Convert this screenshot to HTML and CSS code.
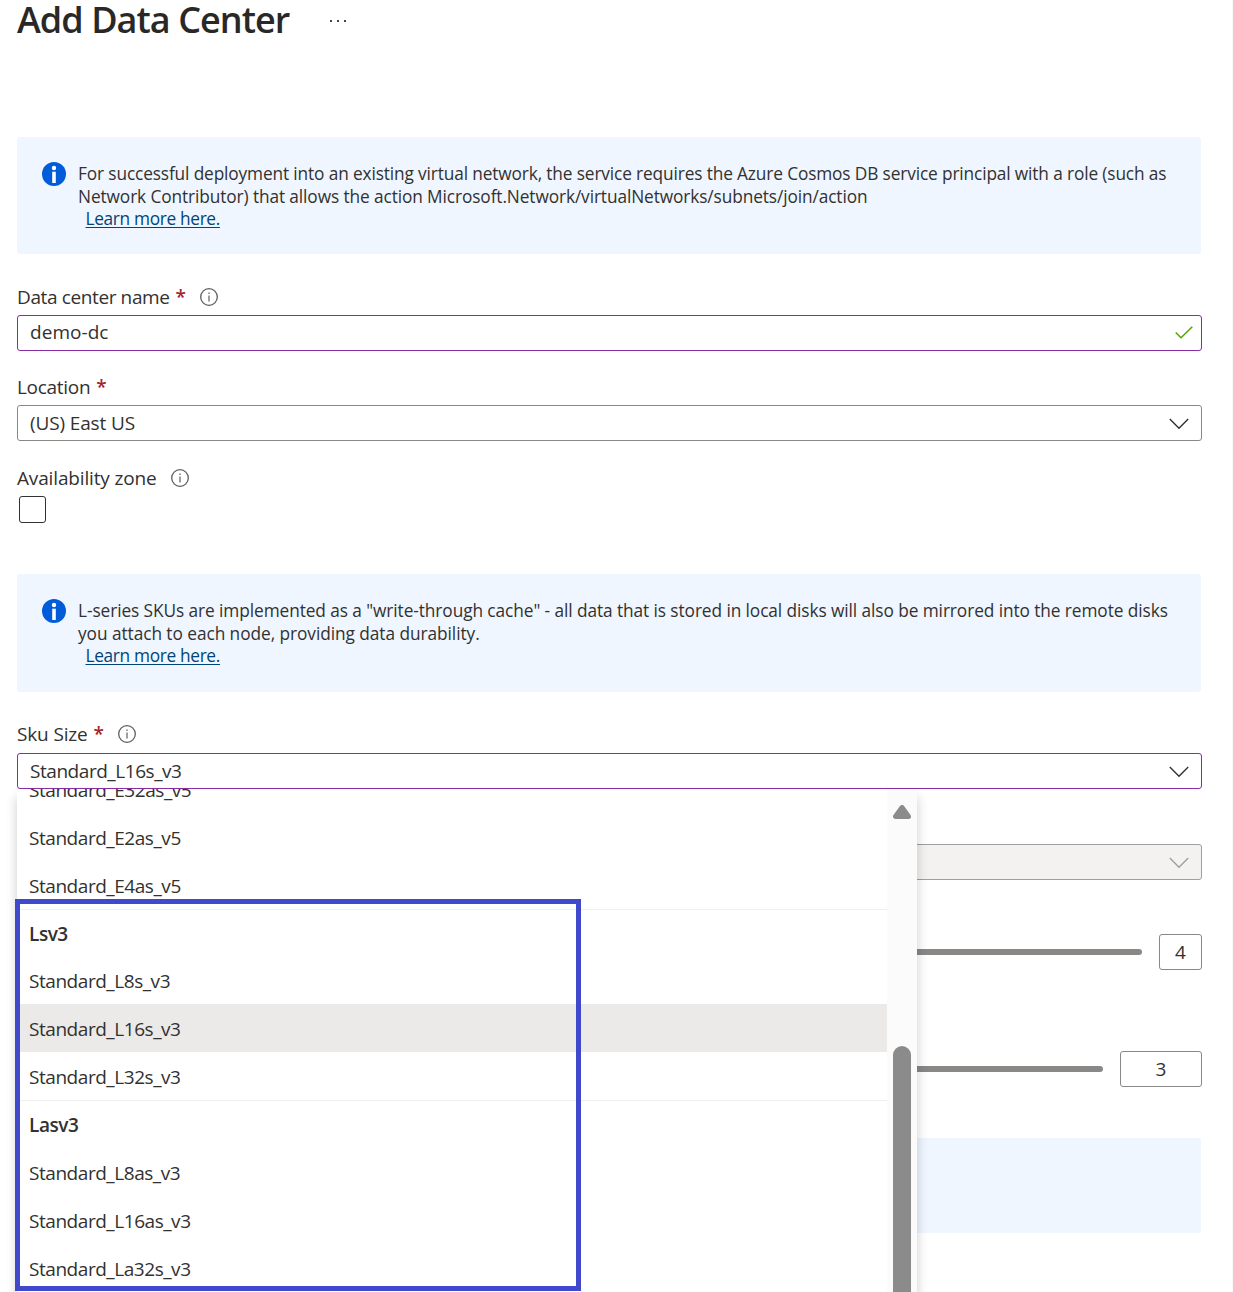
FILE: index.html
```html
<!DOCTYPE html>
<html lang="en">
<head>
<meta charset="utf-8">
<title>Add Data Center</title>
<link rel="stylesheet" href="styles.css">
</head>
<body>
<svg width="0" height="0" class="defs">
  <symbol id="info" viewBox="0 0 18 18"><circle cx="9" cy="9" r="8.3" fill="none" stroke="#605e5c" stroke-width="1.3"/><path d="M9 7.4v6M9 4.6v1.5" stroke="#605e5c" stroke-width="1.2"/></symbol>
  <symbol id="info-solid" viewBox="0 0 24 24"><circle cx="12" cy="12" r="12" fill="#015cda"/><circle cx="12" cy="6" r="2.2" fill="#fff"/><path d="M12 9.7V21" stroke="#fff" stroke-width="3.6"/></symbol>
  <symbol id="chevron" viewBox="0 0 20 12"><path d="M.8 1 10 10.2 19.2 1" fill="none" stroke="currentColor" stroke-width="1.4"/></symbol>
</svg>
<main class="page">
  <header class="header">
    <h1 class="title">Add Data Center</h1>
    <svg class="more" viewBox="0 0 18 2"><path d="M1 0h2v2H1zM8 0h2v2H8zM15 0h2v2h-2z" fill="#444"/></svg>
  </header>

  <section class="notice">
    <svg class="notice-icon"><use href="#info-solid"/></svg>
    <p class="notice-text"><span class="n1">For successful deployment into an existing virtual network, the service requires the Azure Cosmos DB service principal with a role (such as</span><br><span class="n2">Network Contributor) that allows the action Microsoft.Network/virtualNetworks/subnets/join/action</span><br><a class="link" href="#">Learn more here.</a></p>
  </section>

  <div class="label label-name"><span class="l1">Data center name</span> <b class="req">*</b><svg class="info"><use href="#info"/></svg></div>
  <div class="field active"><span class="v1">demo-dc</span><svg class="check" viewBox="0 0 18 13"><path d="M.7 6.5 6 11.7 17.3.7" fill="none" stroke="#57a300" stroke-width="1.5"/></svg></div>

  <div class="label label-location"><span class="l2">Location</span> <b class="req">*</b></div>
  <div class="field"><span class="v2">(US) East US</span><svg class="chevron"><use href="#chevron"/></svg></div>

  <div class="label label-zone"><span class="l3">Availability zone</span><svg class="info"><use href="#info"/></svg></div>
  <div class="checkbox"></div>

  <section class="notice notice-cache">
    <svg class="notice-icon"><use href="#info-solid"/></svg>
    <p class="notice-text"><span class="n3">L-series SKUs are implemented as a "write-through cache" - all data that is stored in local disks will also be mirrored into the remote disks</span><br><span class="n4">you attach to each node, providing data durability.</span><br><a class="link" href="#">Learn more here.</a></p>
  </section>

  <div class="label label-sku"><span class="l4">Sku Size</span> <b class="req">*</b><svg class="info"><use href="#info"/></svg></div>
  <div class="select">
    <div class="field active"><span class="v3">Standard_L16s_v3</span><svg class="chevron"><use href="#chevron"/></svg></div>
    <div class="menu">
      <ul class="options">
        <li class="option">Standard_E32as_v5</li>
        <li class="option">Standard_E2as_v5</li>
        <li class="option">Standard_E4as_v5</li>
        <li class="option group">Lsv3</li>
        <li class="option first">Standard_L8s_v3</li>
        <li class="option selected">Standard_L16s_v3</li>
        <li class="option">Standard_L32s_v3</li>
        <li class="option group">Lasv3</li>
        <li class="option">Standard_L8as_v3</li>
        <li class="option">Standard_L16as_v3</li>
        <li class="option">Standard_La32s_v3</li>
      </ul>
      <div class="scrollbar">
        <svg class="arrow" viewBox="0 0 18 14"><path d="M9 2.5 2.5 11.5h13z" fill="#8b8b8b" stroke="#8b8b8b" stroke-width="5" stroke-linejoin="round"/></svg>
        <div class="thumb"></div>
      </div>
    </div>
    <div class="highlight"></div>
  </div>

  <div class="field disabled"><svg class="chevron"><use href="#chevron"/></svg></div>
  <div class="slider"><div class="track"></div><div class="count">4</div></div>
  <div class="slider nodes"><div class="track"></div><div class="count wide">3</div></div>
  <section class="notice notice-empty"></section>
</main>
</body>
</html>
```

FILE: styles.css
```css
* { box-sizing: border-box; }
body {
  margin: 0;
  height: 1292px;
  overflow: hidden;
  background: #fff;
  color: #323130;
  font: 19px/26px "Open Sans", "Noto Sans", sans-serif;
}
.defs { position: absolute; }
.page {
  height: 1292px;
  padding: 0 30px 0 17px;
  border-right: 1px solid #fafafa;
  white-space: nowrap;
  overflow: hidden;
}
.header { display: flex; align-items: center; gap: 40px; height: 42px; }
.title { margin: 0; padding-bottom: 2px; font-size: 36px; line-height: 40px; font-weight: 600; color: #292827; letter-spacing: -0.95px; }
.more { width: 18px; height: 2px; }

.notice { display: flex; gap: 12px; width: 1184px; height: 117px; margin-top: 95px; padding: 25px; background: #eff6ff; border-radius: 3px; }
.notice-icon { flex: none; width: 24px; height: 24px; }
.notice-text { margin: 1px 0 0; font-size: 17.3px; line-height: 22.6px; }
.n1 { letter-spacing: -0.137px; }
.n2 { letter-spacing: -0.107px; }
.n3 { letter-spacing: -0.086px; }
.n4 { letter-spacing: -0.06px; }
.link { margin-left: 7.5px; letter-spacing: -0.33px; color: #004578; text-decoration: underline; text-decoration-thickness: 1px; text-underline-offset: 2px; }
.notice-cache { height: 118px; margin-top: 51px; }
.notice-empty { height: 95px; margin-top: 51px; }

.label { display: flex; align-items: center; height: 26px; }
.label-name { margin: 30px 0 5px; }
.label-location { margin: 23px 0 5px; }
.label-zone { margin: 24px 0 5px; }
.label-sku { margin: 29px 0 6px; }
.l1 { letter-spacing: -0.38px; }
.l2 { letter-spacing: -0.3px; }
.l3 { letter-spacing: -0.15px; }
.l4 { letter-spacing: -0.15px; }
.req { margin-left: 6px; color: #a4262c; font-weight: 600; }
.info { width: 18px; height: 18px; margin-left: 14px; }

.field { display: flex; align-items: center; justify-content: space-between; width: 1185px; height: 36px; padding: 0 12px; border: 1px solid #8a8886; border-radius: 3px; background: #fff; }
.active { border-color: #8a2da5; }
.v1 { padding-bottom: 2px; letter-spacing: 0.05px; }
.v2 { letter-spacing: -0.13px; }
.v3 { letter-spacing: -0.45px; }
.chevron { width: 20px; height: 12px; margin-top: 2px; color: #323130; }
.check { width: 18px; height: 13px; margin: 0 -4px 2px 0; }
.disabled { justify-content: flex-end; margin-top: 55px; border-color: #a19f9d; background: #f3f2f1; }
.disabled .chevron { color: #a19f9d; }
.checkbox { width: 27px; height: 27px; margin-left: 2px; border: 1px solid #323130; border-radius: 3px; }

.select { position: relative; }
.menu { position: absolute; z-index: 1; top: 36px; left: 0; display: flex; width: 900px; height: 503px; overflow: hidden; background: #fff; }
.select::before { content: ""; position: absolute; top: 40px; left: 0; width: 900px; height: 520px; box-shadow: 0 4px 11px rgba(0, 0, 0, 0.2); }
.options { flex: 1; margin: -24px 0 0; padding: 0; list-style: none; }
.option { height: 47.875px; padding: 2px 12px 0; line-height: 46px; letter-spacing: -0.45px; }
.group { border-top: 1px solid #f0efee; padding-top: 1px; font-weight: 600; }
.first { padding-top: 1px; }
.selected { background: #ebeae8; }
.scrollbar { display: flex; flex-direction: column; align-items: center; width: 30px; padding-top: 16px; background: #fbfbfb; }
.arrow { width: 18px; height: 14px; }
.thumb { flex: 1; width: 18px; margin-top: 227px; border-radius: 9px 9px 0 0; background: #8b8b8b; }
.highlight { position: absolute; z-index: 2; top: 146px; left: -2px; width: 566px; height: 392px; border: 5px solid #4048cc; }

.slider { display: flex; align-items: center; gap: 17px; width: 1185px; height: 36px; margin-top: 54px; }
.nodes { margin-top: 81px; }
.track { flex: 1; height: 6px; border-radius: 3px; background: #8a8886; }
.count { width: 43px; height: 36px; border: 1px solid #8a8886; border-radius: 3px; line-height: 34px; text-align: center; }
.wide { width: 82px; }
```
